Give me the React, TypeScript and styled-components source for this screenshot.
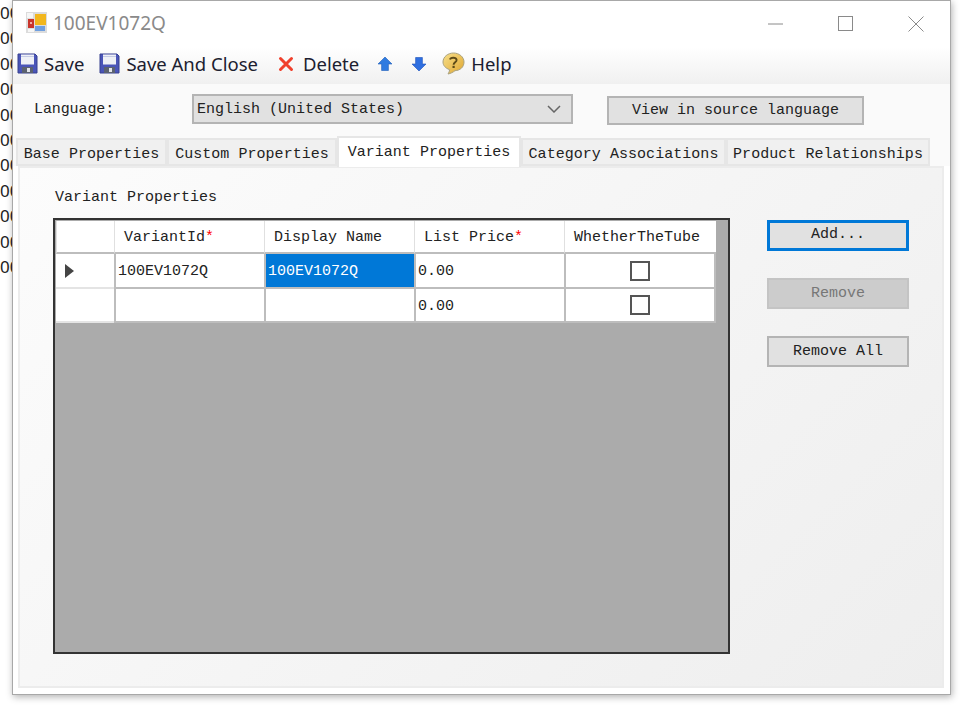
import React from "react";
import styled, { createGlobalStyle } from "styled-components";

const mono = `"Liberation Mono", "DejaVu Sans Mono", monospace`;
const ui = `"Noto Sans", "Open Sans", sans-serif`;

const Global = createGlobalStyle`
  html, body { margin: 0; padding: 0; background: #fff; }
  * { box-sizing: border-box; }
`;

const SaveIcon = () => (
  <svg width="21" height="21" viewBox="0 0 21 21">
    <path d="M1 1h17l2 2v17H1z" fill="#4a55b8" stroke="#36408f" strokeWidth="1" />
    <rect x="4" y="1.5" width="13" height="10" fill="#eef0f6" />
    <rect x="4" y="3" width="13" height="1" fill="#c4cae4" />
    <rect x="5" y="14" width="11" height="6" fill="#5b6270" />
    <rect x="10" y="15" width="3" height="4" fill="#e3e5ea" />
  </svg>
);

const CrossIcon = () => (
  <svg width="16" height="16" viewBox="0 0 16 16">
    <path d="M2.5 2.5l11 11M13.5 2.5l-11 11" stroke="#f0402c" strokeWidth="3" strokeLinecap="round" />
  </svg>
);

const UpIcon = () => (
  <svg width="16" height="16" viewBox="0 0 16 16">
    <path d="M8 1l7 7h-3.600v6.500H4.600V8H1z" fill="#2f7be0" stroke="#1d5cb8" strokeWidth=".6" />
  </svg>
);

const DownIcon = () => (
  <svg width="16" height="16" viewBox="0 0 16 16">
    <path d="M8 15l7-7h-3.600V1.500H4.600V8H1z" fill="#2f6fe0" stroke="#1d50b8" strokeWidth=".6" />
  </svg>
);

const HelpIcon = () => (
  <svg width="23" height="23" viewBox="0 0 23 23">
    <defs>
      <linearGradient id="bubble" x1="0" y1="0" x2="1" y2="1">
        <stop offset="0" stopColor="#f7e08c" />
        <stop offset="1" stopColor="#dfa52e" />
      </linearGradient>
    </defs>
    <path
      d="M11.500 1C17 1 22 4.800 22 10s-4 8.500-9 8.700c-2 1.600-4.500 2.800-7 3.300 1-1.300 1.500-2.700 1.600-4.300C3.500 16.200 1 13.500 1 10 1 4.800 6 1 11.500 1z"
      fill="url(#bubble)"
      stroke="#a9a17e"
      strokeWidth="1"
    />
    <path d="M8 7.500c.5-2 5.800-2.600 6.600.2.500 2.300-3 2.800-3 5" fill="none" stroke="#5c4a18" strokeWidth="1.900" />
    <rect x="10.500" y="13.800" width="2.200" height="2.200" fill="#5c4a18" />
  </svg>
);

const AppIcon = () => (
  <svg width="21" height="21" viewBox="0 0 21 21">
    <rect width="21" height="21" fill="#dcdcdc" />
    <rect x="1" y="1" width="6" height="5" fill="#f6f6f6" />
    <rect x="9" y="2" width="11" height="11" fill="#f2b71e" />
    <rect x="2" y="7" width="6" height="9" fill="#c9352c" />
    <rect x="4" y="10" width="2" height="2" fill="#f0b0a8" />
    <rect x="9" y="14" width="10" height="5" fill="#6f9fe0" />
    <rect x="2" y="17" width="6" height="3" fill="#f6f6f6" />
  </svg>
);

const Desktop = styled.div`
  position: relative;
  width: 963px;
  height: 707px;
  overflow: hidden;
  background: #fff;
`;

const BackLog = styled.div`
  width: 14px;
  overflow: hidden;
  font-family: ${ui};
  font-size: 17px;
  line-height: 25.4px;
  color: #222;
`;

const Win = styled.div`
  position: absolute;
  left: 12px;
  top: 0;
  width: 939px;
  height: 695px;
  display: flex;
  flex-direction: column;
  background: #fff;
  border: 1px solid #a8a8a8;
  box-shadow: 1px 2px 7px rgba(0, 0, 0, 0.3);
`;

const TitleBar = styled.div`
  display: flex;
  align-items: center;
  height: 46px;
  padding-left: 13px;
  flex-shrink: 0;
`;

const AppIconSlot = styled.span`
  display: flex;
  margin-bottom: 4px;
`;

const Title = styled.span`
  margin: 0 0 2px 6px;
  font-family: ${ui};
  font-size: 19px;
  color: #8a8a8a;
`;

const WinControls = styled.div`
  display: flex;
  align-items: center;
  margin-left: auto;
  margin-right: 26px;
  gap: 54px;
`;

const Toolbar = styled.div`
  display: flex;
  align-items: center;
  height: 37px;
  padding: 0 0 4px 4px;
  flex-shrink: 0;
  background: linear-gradient(#fff, #f0f0f0);
`;

const ToolItem = styled.span<{ $gap: number }>`
  display: inline-flex;
  align-items: center;
  gap: 6px;
  margin-right: ${(p) => p.$gap}px;
  font-family: ${ui};
  font-size: 18.5px;
  color: #1c2030;
`;

const DeleteLabel = styled.span`
  margin-left: 3px;
`;

const LangRow = styled.div`
  display: flex;
  align-items: flex-start;
  height: 53px;
  padding: 10px 0 0 21px;
  flex-shrink: 0;
  background: #fafafa;
  font-family: ${mono};
  font-size: 15px;
  color: #222;
`;

const LangLabel = styled.span`
  width: 158px;
  line-height: 28px;
  padding-top: 2px;
  letter-spacing: -0.1px;
`;

const Combo = styled.div`
  display: flex;
  align-items: center;
  justify-content: space-between;
  width: 381px;
  height: 30px;
  padding: 0 10px 0 3px;
  background: #e1e1e1;
  border: 2px solid #b4b4b4;
`;

const SourceButton = styled.div`
  width: 257px;
  height: 29px;
  margin: 2px 0 0 34px;
  display: flex;
  align-items: center;
  justify-content: center;
  background: #e1e1e1;
  border: 2px solid #b4b4b4;
`;

const Tabs = styled.div`
  display: flex;
  align-items: flex-end;
  height: 29px;
  padding-left: 3px;
  flex-shrink: 0;
  background: #fafafa;
`;

const Tab = styled.div<{ $w: number; $active?: boolean }>`
  width: ${(p) => p.$w}px;
  height: ${(p) => (p.$active ? 31 : 28)}px;
  display: flex;
  align-items: ${(p) => (p.$active ? "flex-start" : "center")};
  justify-content: center;
  padding-top: ${(p) => (p.$active ? 6 : 4)}px;
  margin-bottom: ${(p) => (p.$active ? -1 : 0)}px;
  position: relative;
  background: ${(p) => (p.$active ? "#fff" : "#f0f0f0")};
  border: 2px solid #e6e6e6;
  border-bottom: ${(p) => (p.$active ? "none" : "2px solid #e6e6e6")};
  font-family: ${mono};
  font-size: 15px;
  letter-spacing: 0.04px;
  white-space: nowrap;
  color: #222;
`;

const Panel = styled.div`
  flex: 1;
  margin: 0 6px 6px 5px;
  padding: 20px 0 0 33px;
  border: 2px solid #ececec;
  background: linear-gradient(135deg, #fcfcfc, #eeeeee);
  font-family: ${mono};
  font-size: 15px;
  color: #222;
`;

const PanelLabel = styled.div`
  margin-left: 2px;
  line-height: 20px;
  height: 30px;
`;

const PanelBody = styled.div`
  display: flex;
  align-items: flex-start;
`;

const GridFrame = styled.div`
  width: 677px;
  height: 436px;
  padding: 1px;
  background: #ababab;
  border: 2px solid #333;
`;

const GridRows = styled.div`
  display: grid;
  grid-template-columns: 58px 150px 150px 150px 152px;
`;

const HeadCell = styled.div`
  height: 33px;
  display: flex;
  align-items: center;
  padding: 2px 0 0 9px;
  background: #fff;
  border-left: 1px solid #e0e0e0;
  border-bottom: 2px solid #bdbdbd;
  white-space: nowrap;
`;

const Required = styled.span`
  color: #f00;
`;

const RowHead = styled.div<{ $h: number }>`
  height: ${(p) => p.$h}px;
  display: flex;
  align-items: center;
  padding-left: 9px;
  background: #fff;
  border-bottom: 2px solid #e4e4e4;
`;

const Cell = styled.div<{ $h: number; $selected?: boolean; $last?: boolean }>`
  height: ${(p) => p.$h}px;
  display: flex;
  align-items: center;
  padding: 2px 0 0 2px;
  background: ${(p) => (p.$selected ? "#0078d7" : "#fff")};
  color: ${(p) => (p.$selected ? "#fff" : "#222")};
  border-left: 2px solid #bdbdbd;
  border-right: ${(p) => (p.$last ? "2px solid #bdbdbd" : "none")};
  border-bottom: 2px solid #bdbdbd;
`;

const CheckCell = styled(Cell)`
  justify-content: center;
  padding: 0;
`;

const Check = styled.span`
  width: 20px;
  height: 20px;
  background: #fff;
  border: 2px solid #555;
`;

const SideButtons = styled.div`
  display: flex;
  flex-direction: column;
  gap: 27px;
  width: 142px;
  margin: 2px 0 0 37px;
`;

const SideButton = styled.div<{ $focused?: boolean; $disabled?: boolean }>`
  height: 31px;
  display: flex;
  align-items: center;
  justify-content: center;
  padding-bottom: ${(p) => (p.$focused ? 2 : 0)}px;
  background: ${(p) => (p.$disabled ? "#cccccc" : "#e1e1e1")};
  border: ${(p) => (p.$focused ? "3px solid #0078d7" : p.$disabled ? "2px solid #c4c4c4" : "2px solid #b4b4b4")};
  color: ${(p) => (p.$disabled ? "#777" : "#222")};
`;

const rows = ["00", "00", "00", "00", "00", "00", "00", "00", "00", "00", "00"];

export default function App() {
  return (
    <Desktop>
      <Global />
      <BackLog>
        {rows.map((r, i) => (
          <div key={i}>{r}</div>
        ))}
      </BackLog>
      <Win>
        <TitleBar>
          <AppIconSlot>
            <AppIcon />
          </AppIconSlot>
          <Title>100EV1072Q</Title>
          <WinControls>
            <svg width="16" height="16" viewBox="0 0 16 16">
              <path d="M0 8h15" stroke="#8a8a8a" strokeWidth="1" />
            </svg>
            <svg width="16" height="16" viewBox="0 0 16 16">
              <rect x=".5" y=".5" width="14" height="14" fill="none" stroke="#8a8a8a" />
            </svg>
            <svg width="16" height="16" viewBox="0 0 16 16">
              <path d="M.5 .5l15 15M15.500 .5l-15 15" stroke="#8a8a8a" strokeWidth="1" />
            </svg>
          </WinControls>
        </TitleBar>
        <Toolbar>
          <ToolItem $gap={15}>
            <SaveIcon />
            Save
          </ToolItem>
          <ToolItem $gap={20}>
            <SaveIcon />
            Save And Close
          </ToolItem>
          <ToolItem $gap={18}>
            <CrossIcon />
            <DeleteLabel>Delete</DeleteLabel>
          </ToolItem>
          <ToolItem $gap={18}>
            <UpIcon />
          </ToolItem>
          <ToolItem $gap={15}>
            <DownIcon />
          </ToolItem>
          <ToolItem $gap={0}>
            <HelpIcon />
            Help
          </ToolItem>
        </Toolbar>
        <LangRow>
          <LangLabel>Language:</LangLabel>
          <Combo>
            <span>English (United States)</span>
            <svg width="14" height="8" viewBox="0 0 14 8">
              <path d="M1 1l6 6 6-6" fill="none" stroke="#666" strokeWidth="1.500" />
            </svg>
          </Combo>
          <SourceButton>View in source language</SourceButton>
        </LangRow>
        <Tabs>
          <Tab $w={151}>Base Properties</Tab>
          <Tab $w={170}>Custom Properties</Tab>
          <Tab $w={184} $active>
            Variant Properties
          </Tab>
          <Tab $w={205}>Category Associations</Tab>
          <Tab $w={204}>Product Relationships</Tab>
        </Tabs>
        <Panel>
          <PanelLabel>Variant Properties</PanelLabel>
          <PanelBody>
            <GridFrame>
              <GridRows>
                <HeadCell />
                <HeadCell>
                  VariantId<Required>*</Required>
                </HeadCell>
                <HeadCell>Display Name</HeadCell>
                <HeadCell>
                  List Price<Required>*</Required>
                </HeadCell>
                <HeadCell>WhetherTheTube</HeadCell>

                <RowHead $h={35}>
                  <svg width="9" height="14" viewBox="0 0 9 14">
                    <path d="M0 0l9 7-9 7z" fill="#444" />
                  </svg>
                </RowHead>
                <Cell $h={35}>100EV1072Q</Cell>
                <Cell $h={35} $selected>
                  100EV1072Q
                </Cell>
                <Cell $h={35}>0.00</Cell>
                <CheckCell $h={35} $last>
                  <Check />
                </CheckCell>

                <RowHead $h={34} />
                <Cell $h={34} />
                <Cell $h={34} />
                <Cell $h={34}>0.00</Cell>
                <CheckCell $h={34} $last>
                  <Check />
                </CheckCell>
              </GridRows>
            </GridFrame>
            <SideButtons>
              <SideButton $focused>Add...</SideButton>
              <SideButton $disabled>Remove</SideButton>
              <SideButton>Remove All</SideButton>
            </SideButtons>
          </PanelBody>
        </Panel>
      </Win>
    </Desktop>
  );
}
